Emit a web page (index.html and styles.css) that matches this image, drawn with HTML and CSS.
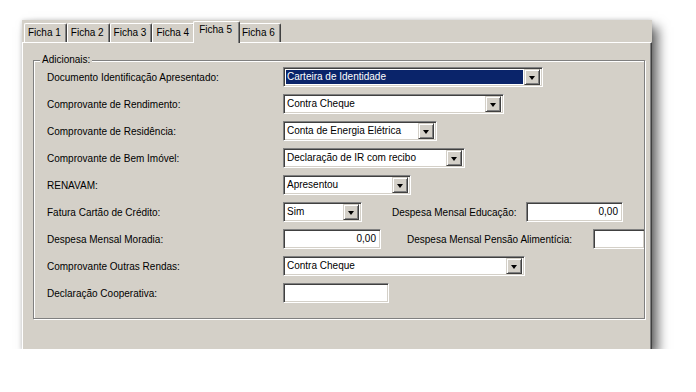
FILE: index.html
```html
<!DOCTYPE html>
<html lang="pt-BR">
<head>
  <meta charset="UTF-8">
  <title>Ficha 5 - Adicionais</title>
  <link rel="stylesheet" href="styles.css">
</head>
<body>
  <div class="window">
    <div class="tabs">
      <div class="tab">Ficha 1</div>
      <div class="tab">Ficha 2</div>
      <div class="tab">Ficha 3</div>
      <div class="tab">Ficha 4</div>
      <div class="tab active">Ficha 5</div>
      <div class="tab">Ficha 6</div>
    </div>
    <div class="panel">
      <fieldset class="group">
        <legend>Adicionais:</legend>

        <div class="row">
          <span class="label">Documento Identificação Apresentado:</span>
          <div class="combo focus w-doc">
            <span class="combo-value">Carteira de Identidade</span>
            <span class="combo-btn"></span>
          </div>
        </div>

        <div class="row">
          <span class="label">Comprovante de Rendimento:</span>
          <div class="combo w-rend">
            <span class="combo-value">Contra Cheque</span>
            <span class="combo-btn"></span>
          </div>
        </div>

        <div class="row">
          <span class="label">Comprovante de Residência:</span>
          <div class="combo w-resid">
            <span class="combo-value">Conta de Energia Elétrica</span>
            <span class="combo-btn"></span>
          </div>
        </div>

        <div class="row">
          <span class="label">Comprovante de Bem Imóvel:</span>
          <div class="combo w-imovel">
            <span class="combo-value">Declaração de IR com recibo</span>
            <span class="combo-btn"></span>
          </div>
        </div>

        <div class="row">
          <span class="label">RENAVAM:</span>
          <div class="combo w-renavam">
            <span class="combo-value">Apresentou</span>
            <span class="combo-btn"></span>
          </div>
        </div>

        <div class="row">
          <span class="label">Fatura Cartão de Crédito:</span>
          <div class="combo w-fatura">
            <span class="combo-value">Sim</span>
            <span class="combo-btn"></span>
          </div>
          <span class="label side side-edu">Despesa Mensal Educação:</span>
          <div class="field num w-edu">0,00</div>
        </div>

        <div class="row">
          <span class="label">Despesa Mensal Moradia:</span>
          <div class="field num w-moradia">0,00</div>
          <span class="label side side-pensao">Despesa Mensal Pensão Alimentícia:</span>
          <div class="field cut w-pensao"></div>
        </div>

        <div class="row">
          <span class="label">Comprovante Outras Rendas:</span>
          <div class="combo w-outras">
            <span class="combo-value">Contra Cheque</span>
            <span class="combo-btn"></span>
          </div>
        </div>

        <div class="row">
          <span class="label">Declaração Cooperativa:</span>
          <div class="field w-coop"></div>
        </div>
      </fieldset>
    </div>
  </div>
</body>
</html>
```

FILE: styles.css
```css
:root {
  --face: #d4d0c8;
  --shadow: #808080;
  --dark: #404040;
  --light: #ffffff;
  --select: #0a246a;
}

body {
  margin: 0;
  background: #fff;
  font-family: 'Liberation Sans', Arial, sans-serif;
  font-size: 10px;
  color: #000;
}

.window {
  margin: 20px 0 0 22px;
  width: 630px;
  height: 329px;
  padding-top: 1px;
  box-sizing: border-box;
  background: var(--face);
  display: flex;
  flex-direction: column;
  box-shadow: 6px 7px 11px rgba(0, 0, 0, 0.6), 0 0 4px rgba(0, 0, 0, 0.15);
}

/* tab strip */
.tabs {
  display: flex;
  align-items: flex-end;
  height: 21px;
  padding-left: 2px;
}

.tab {
  height: 19px;
  box-sizing: border-box;
  padding: 3px 5px 0 3px;
  border-top: 1px solid var(--light);
  border-left: 1px solid var(--light);
  border-right: 1px solid var(--dark);
  box-shadow: inset -1px 0 var(--shadow);
  border-radius: 2px 2px 0 0;
  line-height: 12px;
  white-space: nowrap;
}

.tab.active {
  position: relative;
  z-index: 1;
  height: 22px;
  margin: 0 -2px -1px -2px;
  padding: 2px 7px 0 5px;
  background: var(--face);
}

/* page body */
.panel {
  flex: 1;
  border-top: 1px solid var(--light);
  border-left: 1px solid var(--light);
  border-right: 1px solid var(--dark);
  box-shadow: inset -1px 0 var(--shadow);
  padding: 11px 8px 0 10px;
}

.group {
  margin: 0;
  padding: 1px 0 15px 13px;
  border: 1px solid var(--shadow);
  box-shadow: inset 1px 1px var(--light), 1px 1px var(--light);
  display: flex;
  flex-direction: column;
  gap: 7px;
}

.group legend {
  margin-left: -7px;
  padding: 0 2px;
  line-height: 12px;
  background: var(--face);
}

.row {
  display: flex;
  align-items: center;
  height: 20px;
}

.label {
  width: 236px;
  flex: none;
  white-space: nowrap;
}

.label.side-edu {
  width: 134px;
  margin-left: 30px;
}

.label.side-pensao {
  width: 186px;
  margin-left: 26px;
}

/* sunken 3d box shared by combos and edits */
.combo, .field {
  height: 20px;
  box-sizing: border-box;
  background: #fff;
  border-top: 1px solid var(--shadow);
  border-left: 1px solid var(--shadow);
  border-bottom: 1px solid var(--light);
  border-right: 1px solid var(--light);
  box-shadow: inset 1px 1px var(--dark), inset -1px -1px var(--face);
  flex: none;
}

.combo {
  display: flex;
  padding: 2px;
}

.combo-value {
  flex: 1;
  padding-left: 1px;
  line-height: 14px;
  white-space: nowrap;
  overflow: hidden;
}

.combo.focus .combo-value {
  background: var(--select);
  color: #fff;
  margin-right: 1px;
}

.combo-btn {
  width: 16px;
  height: 16px;
  margin-top: -1px;
  box-sizing: border-box;
  background: var(--face);
  border-top: 1px solid var(--face);
  border-left: 1px solid var(--face);
  border-right: 1px solid var(--dark);
  border-bottom: 1px solid var(--dark);
  box-shadow: inset 1px 1px var(--light), inset -1px -1px var(--shadow);
  display: flex;
  align-items: center;
  justify-content: center;
}

.combo-btn::before {
  content: "";
  border-left: 3px solid transparent;
  border-right: 3px solid transparent;
  border-top: 4px solid #000;
  margin-top: 1px;
}

.field {
  padding: 0 4px;
  line-height: 18px;
}

.field.num {
  text-align: right;
}

.field.cut {
  border-right: none;
}

.w-doc { width: 260px; }
.w-rend { width: 221px; }
.w-resid { width: 154px; }
.w-imovel { width: 182px; }
.w-renavam { width: 128px; }
.w-fatura { width: 79px; }
.w-edu { width: 97px; }
.w-moradia { width: 98px; }
.w-pensao { width: 51px; }
.w-outras { width: 242px; }
.w-coop { width: 106px; }
```
